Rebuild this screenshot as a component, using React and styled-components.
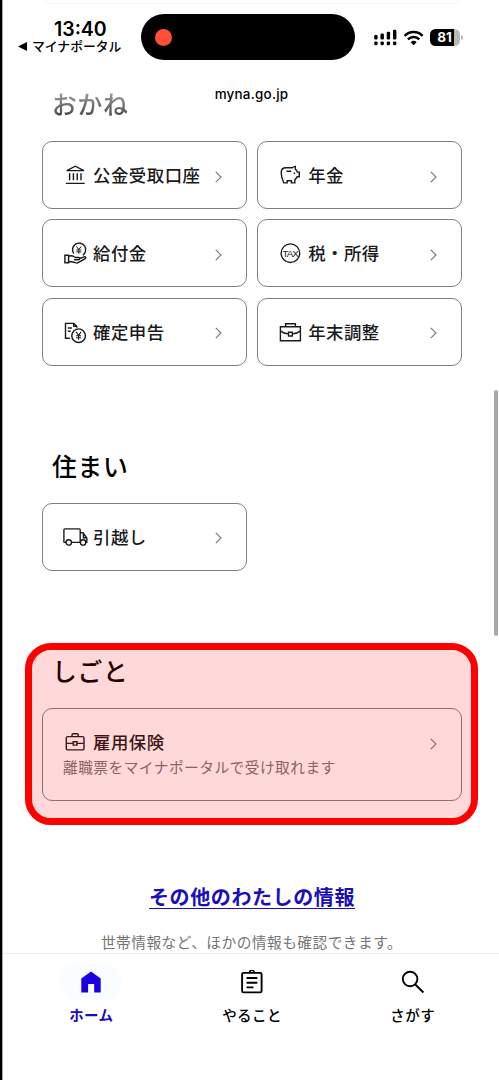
import styled, { createGlobalStyle, css } from "styled-components";

const App = () => {
    return (
        <Screen>
            <GlobalStyle />
            <StatusBar>
                <Clock>
                    <Time>13:40</Time>
                    <BackApp><BackArrow viewBox="0 0 9 9"><path d="M9 0V9L0 4.5Z" /></BackArrow>マイナポータル</BackApp>
                </Clock>
                <Island><RecordDot /></Island>
                <Signals>
                    <SignalIcon />
                    <WifiIcon />
                    <Battery><BatteryBody>81</BatteryBody><BatteryNub /></Battery>
                </Signals>
            </StatusBar>
            <PreviousCardEdge />
            <Address>myna.go.jp</Address>
            <Content>
                <Section>
                    <Title $faded>おかね</Title>
                    <CardGrid>
                        <LinkCard icon={<BankIcon />} label="公金受取口座" />
                        <LinkCard icon={<PiggyIcon />} label="年金" />
                        <LinkCard icon={<BenefitIcon />} label="給付金" />
                        <LinkCard icon={<TaxIcon />} label="税・所得" />
                        <LinkCard icon={<ReturnIcon />} label="確定申告" />
                        <LinkCard icon={<BagIcon />} label="年末調整" />
                    </CardGrid>
                </Section>
                <Section>
                    <Title>住まい</Title>
                    <CardGrid>
                        <LinkCard icon={<TruckIcon />} label="引越し" />
                    </CardGrid>
                </Section>
                <Section>
                    <Title>しごと</Title>
                    <CardGrid>
                        <LinkCard
                            wide
                            icon={<WorkIcon />}
                            label="雇用保険"
                            note="離職票をマイナポータルで受け取れます"
                        />
                    </CardGrid>
                    <Highlight />
                </Section>
                <OtherInfo>
                    <OtherLink href="#">その他のわたしの情報</OtherLink>
                    <OtherNote>世帯情報など、ほかの情報も確認できます。</OtherNote>
                </OtherInfo>
            </Content>
            <ScrollThumb />
            <NavBar>
                <NavItem $active>
                    <NavIcon $active><HomeIcon /></NavIcon>
                    ホーム
                </NavItem>
                <NavItem>
                    <NavIcon><TodoIcon /></NavIcon>
                    やること
                </NavItem>
                <NavItem>
                    <NavIcon><SearchIcon /></NavIcon>
                    さがす
                </NavItem>
            </NavBar>
        </Screen>
    );
};

const LinkCard = ({ icon, label, note, wide }) => (
    <Card $wide={wide}>
        <CardRow>
            {icon}
            <CardLabel>{label}</CardLabel>
            <Chevron viewBox="0 0 7 12"><path d="M.8.9 6 6 .8 11.1" /></Chevron>
        </CardRow>
        {note && <CardNote>{note}</CardNote>}
    </Card>
);

const BankIcon = () => (
    <Icon viewBox="0 0 24 24">
        <path d="M3.7 7.600 12.300 3.200l8.600 4.400zM2.900 20.400h18.800M6.600 10.300v7M10.400 10.300v7M14.200 10.300v7M18 10.300v7" />
    </Icon>
);

const PiggyIcon = () => (
    <Icon viewBox="0 0 24 24">
        <path d="M8 4.800h6.300c1-1 1.800-1.400 3-1.400v2.700c1 .7 1.700 1.800 2 3h2v4.700h-2.200c-.5 1.200-1.200 2-2.200 2.800v3.300h-3.500v-2.200H9.200v2.200H5.800C4.600 17 3.200 14.500 3.200 9.500c0-3 2-4.700 4.800-4.700" />
        <path d="M8.500 8.300h4.700M16.400 9.600v1.500" />
    </Icon>
);

const BenefitIcon = () => (
    <Icon viewBox="0 0 24 24">
        <path d="M10.800 12.600a6.600 6.600 0 1 1 9 1.600" />
        <path d="m13.300 5.300 2.500 3.200 2.500-3.200M15.800 8.500v4.200M13.300 8.900h5M13.300 10.900h5" strokeWidth="1" />
        <path d="M1.900 14.300h3.700v7.500H1.900zM5.600 15.300c2-.8 3.700-.8 5.200.2l1.800 1h3c1.600.1 1.700 2.100 0 2.300H11M16.700 17.500l4.500-1.600c1.500-.4 2.200 1 .9 1.800-2.500 1.700-5 3-8 4.400l-5.300-1.300H5.600" />
    </Icon>
);

const TaxIcon = () => (
    <Icon viewBox="0 0 24 24">
        <circle cx="12.400" cy="12.200" r="9.300" />
        <TaxText x="12.200" y="15.600">TAX</TaxText>
    </Icon>
);

const ReturnIcon = () => (
    <Icon viewBox="0 0 24 24">
        <path d="M6.800 18.300H2.500V3.400h8.400l2.900 2.900v1.400M10.700 3.400v3h3M4.900 8h4M4.900 11.300h2.800" />
        <circle cx="15.600" cy="15.700" r="6.800" />
        <path d="m13.100 11.900 2.500 3.400 2.500-3.400M15.600 15.300v4.500M13.100 15.700h5M13.100 17.700h5" strokeWidth="1.100" />
    </Icon>
);

const BagIcon = () => (
    <Icon viewBox="0 0 24 24">
        <path d="M2.400 6.700h20v14h-20zM7.600 6.500V3.700h9.800v2.800M2.400 10.700c2 1.900 4.800 3 8.100 3.200M22.400 10.700c-2 1.900-4.800 3-8.100 3.200M10.500 12.200h3.800V16h-3.800z" />
    </Icon>
);

const TruckIcon = () => (
    <Icon viewBox="0 0 24 24">
        <path d="M3.100 17.400H1.500q-.6 0-.6-.7V4.700q0-.8.8-.8h14.700q.8 0 .8.800v12.700H8.300M17.200 7.800H20l3.800 5.200v4.400h-1.200M20.400 8.200v4.600h3.200" />
        <circle cx="5.700" cy="17.400" r="2.700" />
        <circle cx="20.100" cy="17.400" r="2.700" />
    </Icon>
);

const WorkIcon = () => (
    <Icon viewBox="0 0 24 24">
        <rect x="3.300" y="6.600" width="17.700" height="13.300" rx="1.500" />
        <path d="M9 6.400V5q0-1.300 1.300-1.300H14q1.300 0 1.300 1.300v1.400M3.500 13.400h6.700M14 13.400h6.800M10.200 11.700h3.800v3.400h-3.800z" />
    </Icon>
);

const HomeIcon = () => (
    <svg width="24" height="24" viewBox="0 0 24 24" fill="currentColor">
        <path d="M2.300 22.600V8.500L12 1.400l9.700 7.100v14.100h-6.500v-8.500H9.100v8.500z" />
    </svg>
);

const TodoIcon = () => (
    <svg width="24" height="24" viewBox="0 0 24 24" fill="none" stroke="currentColor" strokeWidth="1.900">
        <rect x="2.100" y="2.900" width="19.500" height="19.500" rx="1.500" />
        <path d="M6.500 8h10.800M6.500 12.700h10.800M6.500 17.400h7" />
        <path d="M9.500 2.700a2.400 2.400 0 0 1 4.800 0" strokeWidth="1.500" />
    </svg>
);

const SearchIcon = () => (
    <svg width="24" height="24" viewBox="0 0 24 24" fill="none" stroke="currentColor" strokeWidth="1.900">
        <circle cx="9.100" cy="9" r="7.300" />
        <path d="m14.100 14.300 8.300 8.200" />
    </svg>
);

const SignalIcon = () => (
    <svg width="24" height="17" viewBox="0 0 24 17">
        <rect x=".2" y="6" width="3.400" height="4.600" rx="1.100" />
        <rect x="6.500" y="4.600" width="3.400" height="6" rx="1.100" />
        <rect x="12.700" y="2.700" width="3.400" height="7.900" rx="1.100" />
        <rect x="19" y=".8" width="3.400" height="9.800" rx="1.100" />
        <rect x=".2" y="12.600" width="3.400" height="3.600" rx="1.100" />
        <rect x="6.500" y="12.600" width="3.400" height="3.600" rx="1.100" />
        <rect x="12.700" y="12.600" width="3.400" height="3.600" rx="1.100" />
        <rect x="19" y="12.600" width="3.400" height="3.600" rx="1.100" />
    </svg>
);

const WifiIcon = () => (
    <svg width="20" height="16" viewBox="0 0 20 16" fill="none" stroke="#000" strokeWidth="2.500">
        <path d="M.6 5.800a12.800 12.800 0 0 1 18 0M3.900 9.400a8 8 0 0 1 11.400 0" />
        <path d="m9.600 15.300-3-3a4.300 4.300 0 0 1 6 0z" fill="#000" stroke="none" />
    </svg>
);

const GlobalStyle = createGlobalStyle`
    * {
        box-sizing: border-box;
    }
    body {
        margin: 0;
        background-color: #fff;
        font-family: "Noto Sans CJK JP", sans-serif;
    }
`;

const Screen = styled.div`
    position: relative;
    display: flex;
    flex-direction: column;
    height: 1080px;
    overflow: hidden;
    border-left: 2px solid #000;
    box-shadow: inset 1px 0 0 #a8a8a8;
`;

const StatusBar = styled.header`
    display: flex;
    align-items: flex-start;
    height: 70px;
    padding: 14px 0 0 15px;
`;

const Clock = styled.div`
    display: flex;
    flex-direction: column;
    width: 124px;
    padding-top: 5px;
`;

const Time = styled.div`
    padding-left: 37px;
    font: 600 19.500px/20px Inter, sans-serif;
`;

const BackApp = styled.div`
    display: flex;
    align-items: center;
    gap: 5px;
    font-size: 12.800px;
    font-weight: 500;
    line-height: 14px;
    white-space: nowrap;
`;

const BackArrow = styled.svg`
    flex: none;
    width: 9px;
    height: 9px;
    margin-left: 1px;
`;

const Island = styled.div`
    display: flex;
    align-items: center;
    width: 214px;
    height: 46px;
    margin-top: 0.400px;
    padding-left: 14px;
    border-radius: 23px;
    background-color: #000;
`;

const RecordDot = styled.div`
    width: 17px;
    height: 17px;
    border-radius: 50%;
    background-color: #ff4f36;
`;

const Signals = styled.div`
    display: flex;
    align-items: center;
    gap: 6px;
    margin: 15px 0 0 19px;
`;

const Battery = styled.div`
    display: flex;
    align-items: center;
    gap: 1px;
`;

const BatteryBody = styled.div`
    width: 30px;
    height: 17px;
    padding-right: 1px;
    border-radius: 5.500px;
    background: linear-gradient(90deg, #000 24.500px, #b9b9b9 24.500px);
    color: #fff;
    font: 700 13.500px/17px Inter, sans-serif;
    text-align: center;
`;

const BatteryNub = styled.div`
    width: 1.500px;
    height: 5px;
    border-radius: 0 2px 2px 0;
    background-color: #b9b9b9;
`;

/* lower edge of the card scrolled away above */
const PreviousCardEdge = styled.div`
    position: absolute;
    top: -8px;
    left: 40px;
    width: 420px;
    height: 12px;
    border: 1px solid #f6f6f6;
    border-radius: 0 0 9px 9px;
`;

const Address = styled.div`
    position: absolute;
    top: 85px;
    left: 0;
    width: 499px;
    font: 500 13.400px/18px Inter, sans-serif;
    letter-spacing: 0.250px;
    text-align: center;
`;

const Content = styled.main`
    flex: none;
    display: flex;
    flex-direction: column;
    height: 883px;
    padding: 14px 37px 0 40px;
    overflow: hidden;
`;

const Section = styled.section`
    position: relative;
    width: 420px;
    margin-bottom: 80px;
    &:nth-child(3) {
        margin-bottom: 81px;
    }
`;

const Title = styled.h2`
    margin: 0 0 19px;
    padding-left: 10px;
    font-size: 24.800px;
    font-weight: 500;
    line-height: 38px;
    letter-spacing: 0.750px;
    ${props => props.$faded && css`
        background: linear-gradient(#a0a0a0 20%, #505050 80%);
        background-clip: text;
        color: transparent;
    `}
`;

const CardGrid = styled.div`
    display: grid;
    grid-template-columns: 1fr 1fr;
    gap: 10.300px;
`;

const Card = styled.div`
    display: flex;
    flex-direction: column;
    justify-content: center;
    height: ${props => props.$wide ? '93px' : '68px'};
    grid-column: ${props => props.$wide ? '1 / -1' : 'auto'};
    padding: 0 24px 0 20px;
    border: 1px solid #808080;
    border-radius: 10px;
    color: #1a1a1c;
`;

const CardRow = styled.div`
    display: flex;
    align-items: center;
    height: 26px;
`;

const Icon = styled.svg`
    flex: none;
    width: 24px;
    height: 24px;
    margin-right: 6px;
    overflow: visible;
    fill: none;
    stroke: #1a1a1c;
    stroke-width: 1.400;
`;

const TaxText = styled.text`
    font: 400 9.800px "Liberation Sans", sans-serif;
    letter-spacing: -1px;
    fill: #1a1a1c;
    stroke: none;
    text-anchor: middle;
`;

const CardLabel = styled.span`
    flex: 1;
    font-size: 17.400px;
    font-weight: 500;
    line-height: 26px;
    letter-spacing: 0.520px;
    white-space: nowrap;
`;

const Chevron = styled.svg`
    flex: none;
    width: 7px;
    height: 12px;
    margin-top: 3px;
    fill: none;
    stroke: #767676;
    stroke-width: 1.100;
`;

const CardNote = styled.p`
    margin: 0;
    color: #757575;
    font-size: 14.720px;
    font-weight: 400;
    line-height: 24px;
    letter-spacing: 0.450px;
`;

const Highlight = styled.div`
    position: absolute;
    top: -8px;
    left: -17px;
    width: 453px;
    height: 182px;
    border: 7px solid #f00;
    border-radius: 26px;
    background-color: rgba(255, 0, 0, 0.150);
    background-clip: padding-box;
`;

const OtherInfo = styled.div`
    display: flex;
    flex-direction: column;
    align-items: center;
    gap: 18.500px;
    white-space: nowrap;
`;

const OtherLink = styled.a`
    color: #1a0dbc;
    font-size: 20px;
    font-weight: 700;
    line-height: 30px;
    letter-spacing: 0.600px;
    text-decoration: underline;
    text-decoration-thickness: 1px;
    text-underline-offset: 3px;
`;

const OtherNote = styled(CardNote)`
    margin-right: 1px;
`;

const ScrollThumb = styled.div`
    position: absolute;
    top: 390px;
    right: 1px;
    width: 4px;
    height: 246px;
    border-radius: 2px;
    background-color: #a9a9a9;
`;

const NavBar = styled.nav`
    flex: 1;
    display: flex;
    margin-left: 1px;
    padding: 10px 6px 0 8px;
    border-top: 1px solid #eee;
    background-color: #fff;
`;

const NavItem = styled.div`
    flex: 1;
    display: flex;
    flex-direction: column;
    align-items: center;
    gap: 5px;
    color: ${props => props.$active ? '#1a0dbc' : '#000'};
    font-size: 14.500px;
    font-weight: ${props => props.$active ? 700 : 500};
    line-height: 20px;
    letter-spacing: 0.400px;
`;

const NavIcon = styled.div`
    display: grid;
    place-items: center;
    width: 62px;
    height: 36px;
    border-radius: 18px;
    color: ${props => props.$active ? '#1900e0' : '#000'};
    background-color: ${props => props.$active ? '#fafdff' : 'transparent'};
`;

export default App;
